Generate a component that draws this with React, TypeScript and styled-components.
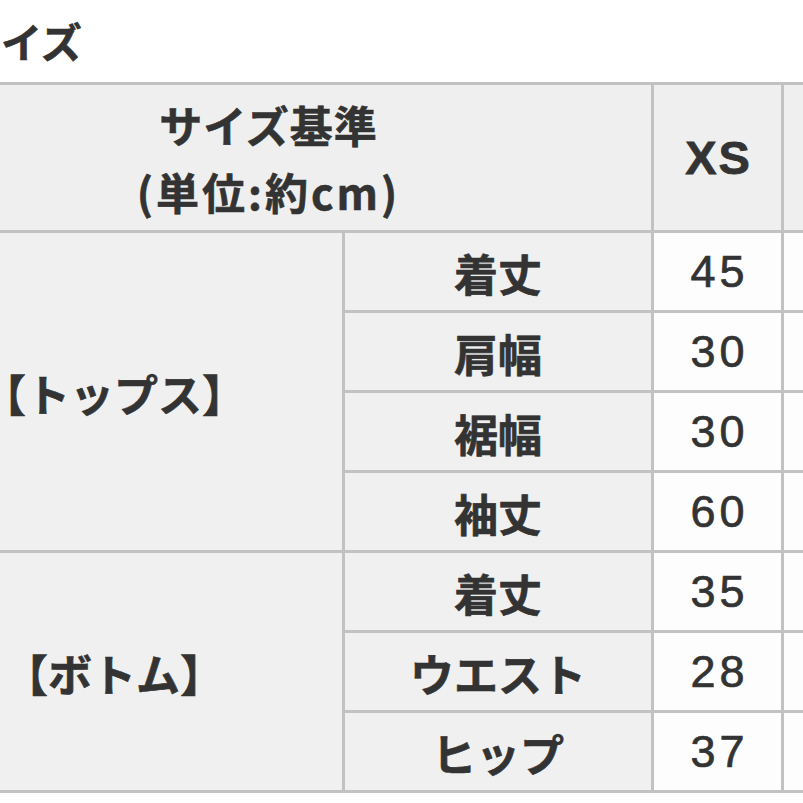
import React from 'react';
import styled, { createGlobalStyle } from 'styled-components';

const GlobalStyle = createGlobalStyle`
  html, body {
    margin: 0;
    padding: 0;
    background: #ffffff;
  }
  body {
    width: 803px;
    height: 803px;
    overflow: hidden;
    font-family: "Noto Sans CJK JP", "Noto Sans", sans-serif;
    color: #333333;
  }
`;

const Page = styled.div`
  width: 803px;
  height: 803px;
  overflow: hidden;
`;

const Title = styled.h2`
  margin: 0 0 0 -40px;
  height: 82px;
  display: flex;
  align-items: center;
  font-size: 41px;
  font-weight: 700;
  line-height: 1;
  padding-bottom: 2px;
  box-sizing: border-box;
  color: #333333;
  -webkit-text-stroke: 0.6px #333333;
`;

/* the table runs past both edges of the frame, as in the screenshot */
const SizeGrid = styled.div`
  margin-left: -117px;
  display: grid;
  grid-template-columns: 456px 306px 127px 127px;
  grid-template-rows: 145px repeat(7, 77px);
  gap: 3px;
  padding: 3px;
  width: max-content;
  background: #c2c2c2;
`;

const Cell = styled.div<{ $bg?: string; $rows?: number; $cols?: number }>`
  grid-row: span ${(p) => p.$rows || 1};
  grid-column: span ${(p) => p.$cols || 1};
  background: ${(p) => p.$bg || '#f0f0f0'};
  display: flex;
  flex-direction: column;
  align-items: center;
  justify-content: center;
  white-space: nowrap;
  color: #333333;
`;

const HeadText = styled.span<{ $spacing?: number }>`
  font-size: 43px;
  line-height: 67px;
  font-weight: 700;
  letter-spacing: ${(p) => p.$spacing ?? 1}px;
  font-family: "Noto Sans CJK JP", sans-serif;
  -webkit-text-stroke: 0.6px #333333;
`;

const SizeName = styled.span`
  font-size: 47px;
  line-height: 1;
  font-weight: 700;
  letter-spacing: 2px;
  margin-right: -2px;
  font-family: "Liberation Sans", "Noto Sans", sans-serif;
  -webkit-text-stroke: 0.8px #333333;
`;

const Label = styled.span`
  font-size: 44px;
  line-height: 1;
  font-weight: 700;
  font-family: "Noto Sans CJK JP", sans-serif;
  padding-top: 2px;
  -webkit-text-stroke: 0.6px #333333;
`;

const Value = styled.span`
  font-size: 45px;
  line-height: 1;
  font-weight: 400;
  letter-spacing: 4px;
  margin-right: -4px;
  font-family: "Liberation Sans", "Noto Sans", sans-serif;
  -webkit-text-stroke: 0.7px #333333;
`;

type Row = { label: string; xs: number };
type Group = { name: string; rows: Row[] };

const groups: Group[] = [
  {
    name: '【トップス】',
    rows: [
      { label: '着丈', xs: 45 },
      { label: '肩幅', xs: 30 },
      { label: '裾幅', xs: 30 },
      { label: '袖丈', xs: 60 },
    ],
  },
  {
    name: '【ボトム】',
    rows: [
      { label: '着丈', xs: 35 },
      { label: 'ウエスト', xs: 28 },
      { label: 'ヒップ', xs: 37 },
    ],
  },
];

const App: React.FC = () => {
  return (
    <Page>
      <GlobalStyle />
      <Title>サイズ</Title>
      <SizeGrid>
        <Cell $cols={2} $bg="#efefef">
          <HeadText>サイズ基準</HeadText>
          <HeadText $spacing={3}>(単位:約cm)</HeadText>
        </Cell>
        <Cell $bg="#efefef">
          <SizeName>XS</SizeName>
        </Cell>
        <Cell $bg="#efefef" />
        {groups.map((g) =>
          g.rows.map((r, i) => (
            <React.Fragment key={g.name + r.label}>
              {i === 0 && (
                <Cell $rows={g.rows.length}>
                  <Label>{g.name}</Label>
                </Cell>
              )}
              <Cell>
                <Label>{r.label}</Label>
              </Cell>
              <Cell $bg="#fdfdfd">
                <Value>{r.xs}</Value>
              </Cell>
              <Cell $bg="#fdfdfd" />
            </React.Fragment>
          ))
        )}
      </SizeGrid>
    </Page>
  );
};

export default App;
